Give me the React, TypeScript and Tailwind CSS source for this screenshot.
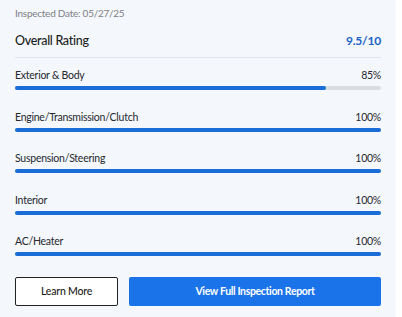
import React from 'react';

const ROWS = [
  { label: 'Exterior & Body', value: 85 },
  { label: 'Engine/Transmission/Clutch', value: 100 },
  { label: 'Suspension/Steering', value: 100 },
  { label: 'Interior', value: 100 },
  { label: 'AC/Heater', value: 100 },
];

const App: React.FC = () => {
  return (
    <div className="flex h-[317px] w-[402px] bg-white font-['Lato',sans-serif]">
      <div className="w-[396px] bg-[#f4f7fc] px-[15px] pt-[5px]">
        <div className="w-[366px]">
          <p className="text-[10px] leading-[16px] tracking-[-0.25px] text-[#7d8086]">Inspected Date: 05/27/25</p>

          <div className="mt-[10px] flex items-center justify-between border-b border-[#e1e5ec] pb-[6px]">
            <h3 className="text-[12.5px] font-medium leading-[20px] tracking-[-0.3px] text-[#1a1d21]">Overall Rating</h3>
            <span className="text-[12px] font-bold leading-[20px] tracking-[-0.2px] text-[#1d63c4]">9.5/10</span>
          </div>

          <div className="mt-[9px] flex flex-col gap-[18.5px]">
            {ROWS.map((row) => (
              <div key={row.label}>
                <div className="flex items-center justify-between text-[10.5px] leading-[16px] tracking-[-0.25px] text-[#25282c]">
                  <span>{row.label}</span>
                  <span>{row.value}%</span>
                </div>
                <div className="mt-[3px] h-[4px] w-full rounded-full bg-[#d9dce1]">
                  <div className="h-full rounded-full bg-[#1a6dd6]" style={{ width: `${row.value}%` }} />
                </div>
              </div>
            ))}
          </div>

          <div className="mt-[21px] flex gap-[11px]">
            <button className="h-[29px] w-[103px] rounded-[2px] border border-[#222] bg-white text-[10.5px] font-medium tracking-[-0.2px] text-[#222]">
              Learn More
            </button>
            <button className="h-[29px] flex-1 rounded-[2px] bg-[#1a73e8] text-[10.5px] font-bold tracking-[-0.35px] text-white">
              View Full Inspection Report
            </button>
          </div>
        </div>
      </div>
    </div>
  );
};

export default App;
